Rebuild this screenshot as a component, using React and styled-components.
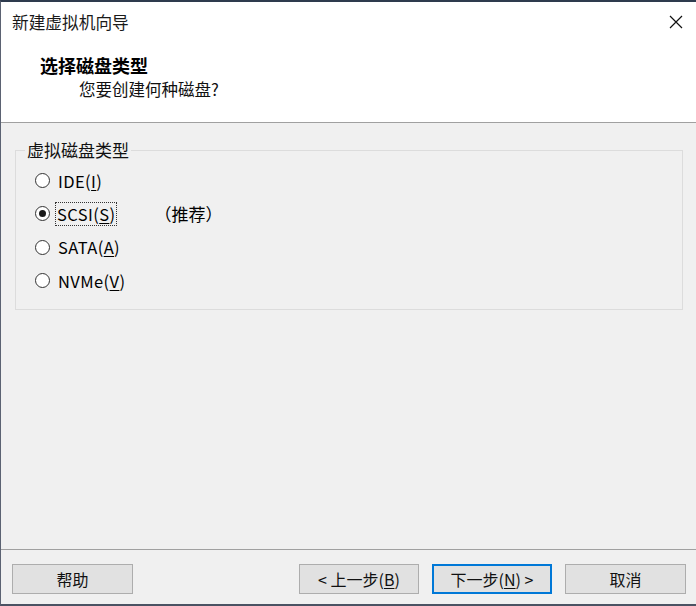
import React from "react";
import styled, { createGlobalStyle } from "styled-components";

const Global = createGlobalStyle`
  html, body { margin: 0; padding: 0; background: #f0f0f0; }
  body { font-family: "Noto Sans CJK SC", "Microsoft YaHei", sans-serif; color: #000; }
`;

const Window = styled.div`
  width: 696px;
  height: 606px;
  box-sizing: border-box;
  border-top: 2px solid #2e3b4e;
  border-left: 1px solid #5b6272;
  border-bottom: 2px solid #4a5262;
  display: flex;
  flex-direction: column;
  background: #f0f0f0;
  font-size: 16px;
`;

const TitleBar = styled.div`
  height: 40px;
  flex: none;
  background: #fff;
  display: flex;
  align-items: center;
  justify-content: space-between;
  padding: 0 12px 0 11px;
  box-sizing: border-box;
`;

const TitleText = styled.span`
  font-size: 16.7px;
  line-height: 20px;
  color: #1a1a1a;
`;

const Close = styled.button`
  border: none;
  background: transparent;
  padding: 0;
  width: 14px;
  height: 14px;
  display: flex;
  margin-right: 1px;
`;

const Header = styled.div`
  flex: none;
  background: #fff;
  box-sizing: border-box;
  padding: 11px 0 0 39px;
  border-bottom: 1px solid #a0a0a0;
  height: 81px;
`;

const Heading = styled.div`
  font-size: 18px;
  font-weight: 700;
  line-height: 24px;
`;

const Sub = styled.div`
  font-size: 16.5px;
  line-height: 24px;
  padding-left: 39px;
  color: #111;
`;

const Body = styled.div`
  flex: 1;
  display: flex;
  flex-direction: column;
  border-bottom: 1px solid #a0a0a0;
`;

const Group = styled.fieldset`
  margin: 17px 13px 0 14px;
  height: 170px;
  box-sizing: border-box;
  border: 1px solid #dcdcdc;
  padding: 4px 0 0 19px;
  min-width: 0;
`;

const Legend = styled.legend`
  font-size: 17px;
  line-height: 20px;
  padding: 0 2px;
  margin-left: -10px;
  color: #111;
`;

const Row = styled.label`
  height: 33.3px;
  display: flex;
  align-items: center;
`;

const Circle = styled.span`
  width: 15px;
  height: 15px;
  box-sizing: border-box;
  border-radius: 50%;
  border: 1px solid #333;
  background: #fff;
  display: flex;
  align-items: center;
  justify-content: center;
  flex: none;
  &::after {
    content: "";
    width: 7px;
    height: 7px;
    border-radius: 50%;
    background: ${(p) => (p.$checked ? "#1a1a1a" : "transparent")};
  }
`;

const Label = styled.span`
  margin-left: ${(p) => (p.$focused ? "5px" : "6px")};
  font-size: 16.5px;
  line-height: 22px;
  padding: 0 1px;
  border: 1px dotted ${(p) => (p.$focused ? "#333" : "transparent")};
  letter-spacing: 0.4px;
`;

const Note = styled.span`
  margin-left: 37px;
  font-size: 17px;
`;

const Footer = styled.div`
  flex: none;
  display: flex;
  padding: 14px 10px 10px 11px;
  gap: 13px;
`;

const Button = styled.button`
  width: ${(p) => p.$w || 120}px;
  height: 30px;
  box-sizing: border-box;
  background: #e1e1e1;
  border: 1px solid ${(p) => (p.$default ? "#0078d7" : "#adadad")};
  box-shadow: ${(p) => (p.$default ? "inset 0 0 0 1px #0078d7" : "none")};
  font-family: "Noto Sans CJK SC", sans-serif;
  font-size: 16px;
  color: #111;
  padding: 0;
  margin-left: ${(p) => p.$ml || 0}px;
  display: flex;
  align-items: center;
  justify-content: center;
`;

const U = styled.span`
  text-decoration: underline;
  text-underline-offset: 2px;
`;

const options = [
  { key: "IDE", m: "I" },
  { key: "SCSI", m: "S", checked: true },
  { key: "SATA", m: "A" },
  { key: "NVMe", m: "V" },
];

export default function App() {
  return (
    <>
      <Global />
      <Window>
        <TitleBar>
          <TitleText>新建虚拟机向导</TitleText>
          <Close aria-label="close">
            <svg width="14" height="14" viewBox="0 0 14 14">
              <path d="M1 1L13 13M13 1L1 13" stroke="#111" strokeWidth="1.2" fill="none" />
            </svg>
          </Close>
        </TitleBar>
        <Header>
          <Heading>选择磁盘类型</Heading>
          <Sub>您要创建何种磁盘?</Sub>
        </Header>
        <Body>
          <Group>
            <Legend>虚拟磁盘类型</Legend>
            {options.map((o) => (
              <Row key={o.key}>
                <Circle $checked={o.checked} />
                <Label $focused={o.checked}>
                  {o.key}(<U>{o.m}</U>)
                </Label>
                {o.checked && <Note>（推荐）</Note>}
              </Row>
            ))}
          </Group>
        </Body>
        <Footer>
          <Button $w={121}>帮助</Button>
          <Button $w={120} $ml={153}>
            &lt; 上一步(<U>B</U>)
          </Button>
          <Button $w={120} $default>
            下一步(<U>N</U>) &gt;
          </Button>
          <Button $w={121}>取消</Button>
        </Footer>
      </Window>
    </>
  );
}
